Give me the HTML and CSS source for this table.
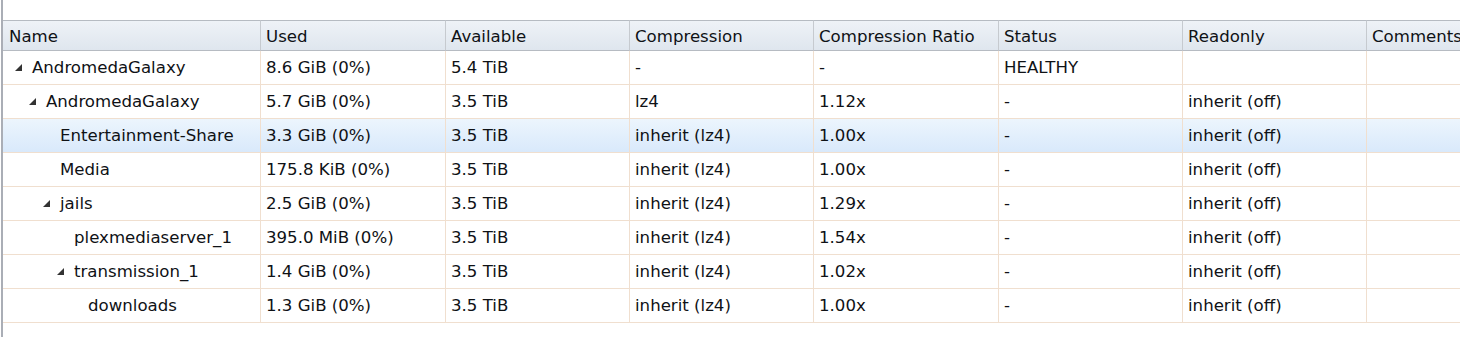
FILE: index.html
```html
<!DOCTYPE html>
<html>
<head>
<meta charset="utf-8">
<link rel="stylesheet" href="styles.css">
</head>
<body>
<div class="pane">
  <table class="grid">
    <colgroup>
      <col class="c-name"><col class="c185"><col class="c184"><col class="c184"><col class="c185"><col class="c184"><col class="c184"><col class="c184">
    </colgroup>
    <thead>
      <tr>
        <th>Name</th><th>Used</th><th>Available</th><th>Compression</th><th>Compression Ratio</th><th>Status</th><th>Readonly</th><th>Comments</th>
      </tr>
    </thead>
    <tbody>
      <tr>
        <td class="name l0"><span class="tog"><svg width="7" height="7" viewBox="0 0 7 7"><polygon points="7,0 7,7 0,7"/></svg></span>AndromedaGalaxy</td>
        <td>8.6 GiB (0%)</td><td>5.4 TiB</td><td>-</td><td>-</td><td>HEALTHY</td><td></td><td></td>
      </tr>
      <tr>
        <td class="name l1"><span class="tog"><svg width="7" height="7" viewBox="0 0 7 7"><polygon points="7,0 7,7 0,7"/></svg></span>AndromedaGalaxy</td>
        <td>5.7 GiB (0%)</td><td>3.5 TiB</td><td>lz4</td><td>1.12x</td><td>-</td><td>inherit (off)</td><td></td>
      </tr>
      <tr class="selected">
        <td class="name l2"><span class="tog"></span>Entertainment-Share</td>
        <td>3.3 GiB (0%)</td><td>3.5 TiB</td><td>inherit (lz4)</td><td>1.00x</td><td>-</td><td>inherit (off)</td><td></td>
      </tr>
      <tr>
        <td class="name l2"><span class="tog"></span>Media</td>
        <td>175.8 KiB (0%)</td><td>3.5 TiB</td><td>inherit (lz4)</td><td>1.00x</td><td>-</td><td>inherit (off)</td><td></td>
      </tr>
      <tr>
        <td class="name l2"><span class="tog"><svg width="7" height="7" viewBox="0 0 7 7"><polygon points="7,0 7,7 0,7"/></svg></span>jails</td>
        <td>2.5 GiB (0%)</td><td>3.5 TiB</td><td>inherit (lz4)</td><td>1.29x</td><td>-</td><td>inherit (off)</td><td></td>
      </tr>
      <tr>
        <td class="name l3"><span class="tog"></span>plexmediaserver_1</td>
        <td>395.0 MiB (0%)</td><td>3.5 TiB</td><td>inherit (lz4)</td><td>1.54x</td><td>-</td><td>inherit (off)</td><td></td>
      </tr>
      <tr>
        <td class="name l3"><span class="tog"><svg width="7" height="7" viewBox="0 0 7 7"><polygon points="7,0 7,7 0,7"/></svg></span>transmission_1</td>
        <td>1.4 GiB (0%)</td><td>3.5 TiB</td><td>inherit (lz4)</td><td>1.02x</td><td>-</td><td>inherit (off)</td><td></td>
      </tr>
      <tr>
        <td class="name l4"><span class="tog"></span>downloads</td>
        <td>1.3 GiB (0%)</td><td>3.5 TiB</td><td>inherit (lz4)</td><td>1.00x</td><td>-</td><td>inherit (off)</td><td></td>
      </tr>
    </tbody>
  </table>
</div>
</body>
</html>
```

FILE: styles.css
```css
html, body {
  margin: 0;
  padding: 0;
  background: #ffffff;
  overflow: hidden;
}
body {
  width: 1460px;
  height: 337px;
}
.pane {
  margin-left: 1px;
  border-left: 2px solid #aaaeb6;
  height: 337px;
  padding-top: 20px;
  box-sizing: border-box;
  overflow: hidden;
}
.grid {
  border-collapse: separate;
  border-spacing: 0;
  table-layout: fixed;
  width: 1548px;
  font-family: "DejaVu Sans", Verdana, sans-serif;
  font-size: 16.6px;
  color: #0f1216;
}
.c-name { width: 258px; }
.c185 { width: 185px; }
.c184 { width: 184px; }
.grid th, .grid td {
  box-sizing: border-box;
  text-align: left;
  font-weight: normal;
  white-space: nowrap;
  overflow: hidden;
  padding: 0 0 0 5px;
}
.grid th {
  height: 31px;
  padding-top: 1px;
  border-top: 1px solid #b6bbc2;
  border-bottom: 1px solid #b6bbc2;
  border-right: 1px solid #c6cacf;
  background: linear-gradient(#eef2f7, #dfe6ee);
}
.grid th:first-child {
  padding-left: 6px;
}
.grid td {
  height: 34px;
  border-bottom: 1px solid #f0dfcf;
  border-right: 1px solid #f0dfcf;
}
.selected td {
  background: linear-gradient(#ecf5fd, #d9e9fb);
}
.tog {
  display: inline-block;
  width: 23px;
  height: 10px;
  position: relative;
}
.tog svg {
  position: absolute;
  left: 6px;
  top: 1px;
}
.tog polygon {
  fill: #333333;
}
.grid td.l0 { padding-left: 6px; }
.grid td.l1 { padding-left: 20px; }
.grid td.l2 { padding-left: 34px; }
.grid td.l3 { padding-left: 48px; }
.grid td.l4 { padding-left: 62px; }
```
